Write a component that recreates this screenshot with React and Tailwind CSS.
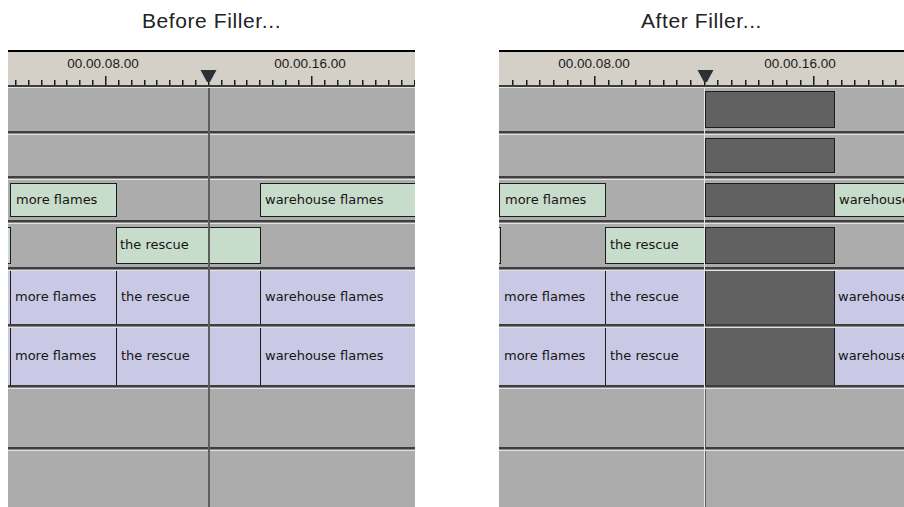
import React from 'react';

// timeline colours
const LINE = 'border-[#1c1c1c]';

const Ruler = ({ first, step, count, majors, labels, marker }) => {
  const ticks = [];
  for (let i = 0; i < count; i++) {
    const x = Math.round(first + i * step);
    const big = majors.includes(i);
    ticks.push(<rect key={i} x={x} y={big ? 24 : 28} width="1.5" height={big ? 9 : 5} fill="#1a1a1a" />);
  }
  return (
    <div className="flex flex-col">
      <div className="h-[2px] bg-black" />
      <div className="relative h-[33px] bg-[#d4d0c8]">
        {labels.map((l) => (
          <span
            key={l.text}
            className="absolute top-[5px] -translate-x-1/2 text-[13.5px] leading-[13px] text-[#1a1a1a] font-['Liberation_Sans',Arial,sans-serif]"
            style={{ left: l.x }}
          >
            {l.text}
          </span>
        ))}
        <svg className="absolute inset-0" width="100%" height="33">
          {ticks}
          <path d={`M${marker - 8} 18 L${marker + 8} 18 L${marker + 1.5} 30 L${marker - 1.5} 30 Z`} fill="#2b3036" />
        </svg>
      </div>
      <div className="h-[2px] bg-[#3c3c3c]" />
      <div className="h-[1px] bg-[#e2e2e2]" />
    </div>
  );
};

const Sep = () => (
  <div className="flex flex-col">
    <div className="h-[2px] bg-[#3e3e3e]" />
    <div className="h-[1px] bg-[#8a8a8a]" />
    <div className="h-[1px] bg-[#e2e2e2]" />
  </div>
);

const Track = ({ h, children }) => (
  <div className={`relative flex shrink-0 bg-[#acacac] ${h}`}>{children}</div>
);

const Label = ({ children }) => (
  <span className="whitespace-nowrap text-[13px] text-[#151515] font-['DejaVu_Sans',sans-serif]">{children}</span>
);

// clip that sits inside the lane with a small margin
const Box = ({ w, tone, label, pad = 'pl-[5px]', edge = 'border' }) => (
  <div className={`my-[3px] flex shrink-0 items-center overflow-hidden ${edge} ${LINE} ${pad} ${tone} ${w}`}>
    {label && <Label>{label}</Label>}
  </div>
);

// clip that fills the whole lane (video tracks)
const Full = ({ w, tone, label, pad = 'pl-[4px]', edge = 'border-r' }) => (
  <div className={`flex shrink-0 items-center overflow-hidden ${edge} ${LINE} ${pad} ${tone} ${w}`}>
    {label && <Label>{label}</Label>}
  </div>
);

const GREEN = 'bg-[#c8dccb]';
const PURPLE = 'bg-[#c9c9e6]';
const FILL = 'bg-[#616161]';

const heights = ['h-[43px]', 'h-[41px]', 'h-[40px]', 'h-[43px]', 'h-[53px]', 'h-[57px]', 'h-[58px]', 'h-[60px]'];

const Before = () => (
  <div className="relative flex flex-col overflow-hidden">
    <Ruler
      first={7}
      step={12.86}
      count={32}
      majors={[7, 23]}
      marker={200.5}
      labels={[{ text: '00.00.08.00', x: 95 }, { text: '00.00.16.00', x: 302 }]}
    />
    <Track h={heights[0]} />
    <Sep />
    <Track h={heights[1]} />
    <Sep />
    <Track h={heights[2]}>
      <div className="w-[2px] shrink-0" />
      <Box w="w-[107px]" tone={GREEN} label="more flames" />
      <div className="w-[143px] shrink-0" />
      <Box w="w-[170px]" tone={GREEN} label="warehouse flames" pad="pl-[4px]" />
    </Track>
    <Sep />
    <Track h={heights[3]}>
      <Box w="w-[3px]" tone={GREEN} pad="pl-0" edge="border-y border-r" />
      <div className="w-[105px] shrink-0" />
      <Box w="w-[145px]" tone={GREEN} label="the rescue" pad="pl-[3px]" />
    </Track>
    <Sep />
    {[4, 5].map((i) => (
      <React.Fragment key={i}>
        <Track h={heights[i]}>
          <Full w="w-[3px]" tone={PURPLE} pad="pl-0" />
          <Full w="w-[106px]" tone={PURPLE} label="more flames" />
          <Full w="w-[144px]" tone={PURPLE} label="the rescue" />
          <Full w="w-[170px]" tone={PURPLE} label="warehouse flames" edge="" />
        </Track>
        <Sep />
      </React.Fragment>
    ))}
    <Track h={heights[6]} />
    <Sep />
    <Track h={heights[7]} />
    {/* playhead */}
    <div className="absolute left-[200px] top-[38px] bottom-0 w-[2px] bg-[#5e5e5e]" />
  </div>
);

const After = () => (
  <div className="relative flex flex-col overflow-hidden">
    <Ruler
      first={12.8}
      step={13.7}
      count={30}
      majors={[6, 22]}
      marker={206.5}
      labels={[{ text: '00.00.08.00', x: 95 }, { text: '00.00.16.00', x: 301 }]}
    />
    {[0, 1].map((i) => (
      <React.Fragment key={i}>
        <Track h={heights[i]}>
          <div className="w-[206px] shrink-0" />
          <Box w="w-[130px]" tone={FILL} pad="pl-0" />
        </Track>
        <Sep />
      </React.Fragment>
    ))}
    <Track h={heights[2]}>
      <Box w="w-[107px]" tone={GREEN} label="more flames" />
      <div className="w-[99px] shrink-0" />
      <Box w="w-[130px]" tone={FILL} pad="pl-0" />
      <Box w="w-[120px]" tone={GREEN} label="warehouse flames" pad="pl-[4px]" edge="border-y border-r" />
    </Track>
    <Sep />
    <Track h={heights[3]}>
      <Box w="w-[2px]" tone={GREEN} pad="pl-0" edge="border-y border-r" />
      <div className="w-[104px] shrink-0" />
      <Box w="w-[100px]" tone={GREEN} label="the rescue" pad="pl-[4px]" />
      <Box w="w-[130px]" tone={FILL} pad="pl-0" />
    </Track>
    <Sep />
    {[4, 5].map((i) => (
      <React.Fragment key={i}>
        <Track h={heights[i]}>
          <Full w="w-[107px]" tone={PURPLE} label="more flames" pad="pl-[5px]" />
          <Full w="w-[99px]" tone={PURPLE} label="the rescue" />
          <div className={`w-[130px] shrink-0 border-x ${LINE} ${FILL}`} />
          <Full w="w-[120px]" tone={PURPLE} label="warehouse flames" pad="pl-[3px]" edge="" />
        </Track>
        <Sep />
      </React.Fragment>
    ))}
    {[6, 7].map((i) => (
      <React.Fragment key={i}>
        <Track h={heights[i]}>
          <div className="w-[206px] shrink-0" />
          <div className="w-[1px] shrink-0 bg-[#5a5a5a]" />
        </Track>
        {i === 6 && <Sep />}
      </React.Fragment>
    ))}
    {/* playhead */}
    <div className="absolute left-[205px] top-[38px] bottom-0 w-[1px] bg-[#e8e8e8]" />
  </div>
);

const Title = ({ children }) => (
  <div className="flex h-[50px] items-start justify-center pt-[9px] text-[21px] leading-[24px] tracking-[0.6px] text-[#222] font-['Liberation_Sans',Arial,sans-serif]">
    {children}
  </div>
);

export default function App() {
  return (
    <div className="flex h-[507px] w-[904px] overflow-hidden bg-white">
      <div className="ml-[8px] flex w-[407px] shrink-0 flex-col">
        <Title>Before Filler...</Title>
        <Before />
      </div>
      <div className="ml-[84px] flex w-[405px] shrink-0 flex-col">
        <Title>After Filler...</Title>
        <After />
      </div>
    </div>
  );
}
